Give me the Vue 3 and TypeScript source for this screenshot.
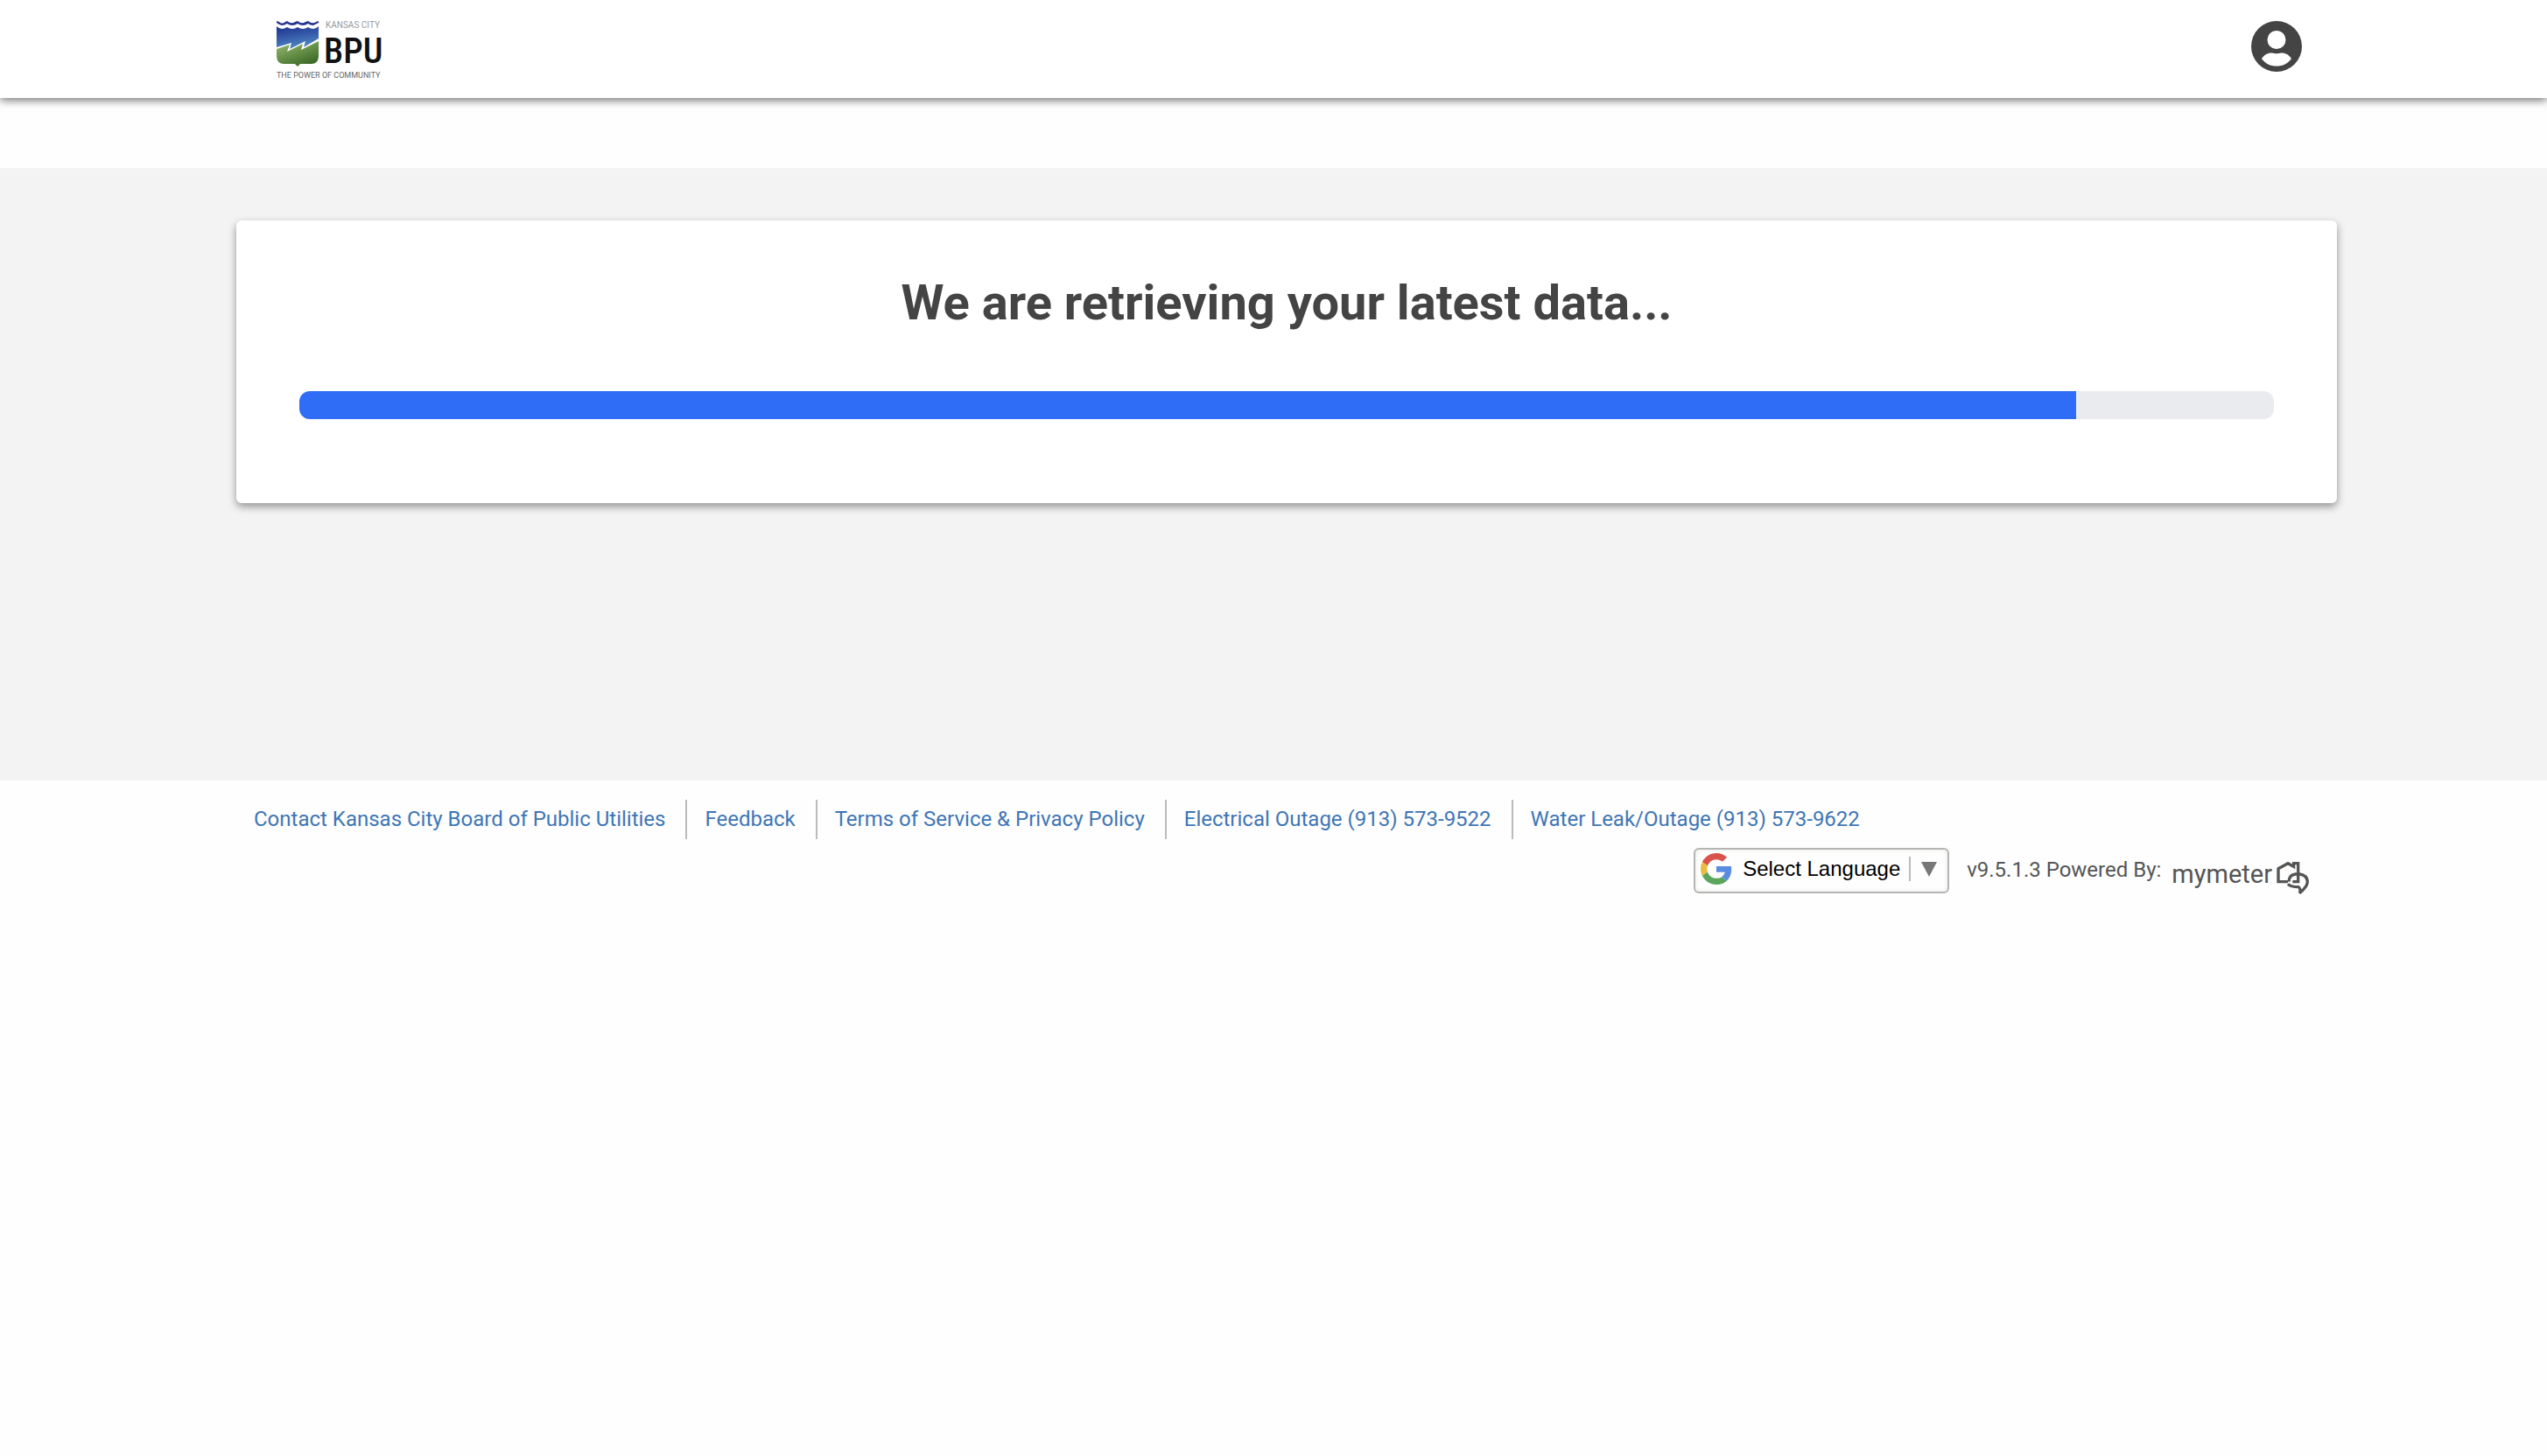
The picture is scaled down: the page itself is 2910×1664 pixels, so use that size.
<script setup lang="ts">
interface FooterLink {
  label: string
  href: string
}

const progress = 90

const links: FooterLink[] = [
  { label: 'Contact Kansas City Board of Public Utilities', href: '#contact' },
  { label: 'Feedback', href: '#feedback' },
  { label: 'Terms of Service & Privacy Policy', href: '#terms' },
  { label: 'Electrical Outage (913) 573-9522', href: 'tel:9135739522' },
  { label: 'Water Leak/Outage (913) 573-9622', href: 'tel:9135739622' },
]
</script>

<template>
  <div class="page">
    <header class="header">
      <div class="container header-inner">
        <a class="brand" href="#home" aria-label="Kansas City BPU">
          <svg width="130" height="70" viewBox="0 0 130 70">
            <defs>
              <linearGradient id="sky" x1="0" y1="0" x2="0.3" y2="1">
                <stop offset="0" stop-color="#1c2f8c" />
                <stop offset="1" stop-color="#4f86c4" />
              </linearGradient>
              <linearGradient id="land" x1="0" y1="0" x2="0.6" y2="1">
                <stop offset="0" stop-color="#9cc070" />
                <stop offset="1" stop-color="#3c6a28" />
              </linearGradient>
            </defs>
            <path d="M1 0 L4 1 Q7 4 11 1 L13 0 Q18 4 22 1 L25 0 Q30 4 34 1 L37 0 Q42 4 46 1 L49 0 V2 Q45 4 43 5 Q39 5 37 3 Q34 5 31 5 Q28 5 25 3 Q22 5 19 5 Q16 5 13 3 Q10 5 7 5 Q3 4 1 2 Z" fill="#26358f" />
            <path d="M1 6 Q4 9 7 9 Q10 9 13 7 Q16 9 19 9 Q22 9 25 7 Q28 9 31 9 Q34 9 37 7 Q40 9 43 9 Q46 9 49 6 V20 L32 30 L34 23 L16 32 L18 25 L1 30 Z" fill="url(#sky)" />
            <path d="M1 32 L16 27 L13 35 L31 26 L29 33 L49 23 V41 Q48 49 41 49 H28 L25 52 L22 49 H9 Q2 49 1 41 Z" fill="url(#land)" />
            <text x="57" y="8" class="brand-city">KANSAS CITY</text>
            <text x="55" y="48" class="brand-name">BPU</text>
            <text x="1" y="65" class="brand-motto">THE POWER OF COMMUNITY</text>
          </svg>
        </a>
        <button class="account" type="button" aria-label="Account">
          <svg width="58" height="58" viewBox="0 0 58 58">
            <circle cx="29" cy="29" r="29" fill="#444" />
            <circle cx="29" cy="21.500" r="10.500" fill="#fff" />
            <path d="M12 43 C15 38 20 36 24 36.500 C27 37.500 31 37.500 34 36.500 C38 36 43 38 46 43 C42 49 36 51.500 29 51.500 C22 51.500 16 49 12 43 Z" fill="#fff" />
          </svg>
        </button>
      </div>
    </header>

    <main class="main">
      <div class="container">
        <section class="card">
          <h1 id="status">We are retrieving your latest data...</h1>
          <div class="track" role="progressbar" aria-labelledby="status" :aria-valuenow="progress" aria-valuemin="0" aria-valuemax="100">
            <div class="fill" :style="{ width: progress + '%' }"></div>
          </div>
        </section>
      </div>
    </main>

    <footer class="footer">
      <div class="container">
        <nav class="links">
          <a v-for="link in links" :key="link.label" :href="link.href">{{ link.label }}</a>
        </nav>
        <div class="credits">
          <label class="language">
            <svg width="36" height="36" viewBox="0 0 48 48" aria-hidden="true">
              <path fill="#d9524b" d="M24 9.500c3.540 0 6.710 1.220 9.210 3.600l6.850-6.850C35.900 2.380 30.470 0 24 0 14.620 0 6.510 5.380 2.560 13.220l7.980 6.190C12.430 13.720 17.740 9.500 24 9.500z" />
              <path fill="#5a8de0" d="M46.980 24.550c0-1.570-.150-3.090-.380-4.550H24v9.020h12.940c-.580 2.960-2.260 5.480-4.780 7.180l7.730 6c4.510-4.180 7.090-10.360 7.090-17.650z" />
              <path fill="#e9bb40" d="M10.530 28.590c-.480-1.450-.760-2.990-.760-4.590s.270-3.140.760-4.590l-7.980-6.190C.920 16.460 0 20.120 0 24c0 3.880.920 7.540 2.560 10.780l7.970-6.190z" />
              <path fill="#5ba55c" d="M24 48c6.480 0 11.930-2.130 15.890-5.810l-7.730-6c-2.150 1.450-4.920 2.300-8.160 2.300-6.260 0-11.570-4.220-13.470-9.910l-7.980 6.190C6.510 42.620 14.620 48 24 48z" />
            </svg>
            <select aria-label="Select Language">
              <option>Select Language</option>
            </select>
            <span class="arrow" aria-hidden="true"></span>
          </label>
          <span class="version">v9.5.1.3 Powered By:</span>
          <a class="mymeter" href="#mymeter">
            <span>mymeter</span>
            <svg width="40" height="42" viewBox="0 0 120 126" fill="none" stroke="#555" stroke-width="10" aria-hidden="true">
              <path d="M42 74 H9 V29 L42 11 L62 22 V11 H77 V74 H58" />
              <path d="M45 74 Q46 50 68 48 H82 Q108 52 109 74 Q109 90 82 113 Q88 98 78 92 Q52 92 42 82" />
            </svg>
          </a>
        </div>
      </div>
    </footer>
  </div>
</template>

<style>
body {
  background: #fefefe;
}
</style>

<style scoped>
.page {
  font-family: Roboto, "Liberation Sans", sans-serif;
  color: #444;
}

.container {
  box-sizing: border-box;
  max-width: 2400px;
  margin: 0 auto;
}

.header {
  position: relative;
  padding-left: 30px;
  background: #fff;
  box-shadow: 0 2px 10px rgba(0, 0, 0, 0.6);
}

.header-inner {
  display: flex;
  justify-content: space-between;
  align-items: flex-start;
  height: 112px;
  padding: 24px 40px 0 45px;
}

.brand,
.account,
.account svg,
.brand svg {
  display: block;
}

.brand-city {
  font-size: 10px;
  fill: #999;
}

.brand-name {
  font-family: "Roboto Condensed", "Liberation Sans Narrow", Roboto, sans-serif;
  font-size: 40px;
  font-weight: 500;
  fill: #111;
}

.brand-motto {
  font-size: 9px;
  fill: #666;
}

.account {
  padding: 0;
  border: 0;
  background: none;
}

.main {
  box-sizing: border-box;
  min-height: 700px;
  margin-top: 80px;
  padding: 60px 0 60px 30px;
  background: #f3f3f3;
}

.card {
  padding: 60px 72px 96px;
  border-radius: 6px;
  background: #fff;
  box-shadow: 0 4px 10px rgba(0, 0, 0, 0.4);
}

h1 {
  margin: 0 0 67px;
  font-size: 56px;
  font-weight: 700;
  line-height: 68px;
  text-align: center;
}

.track {
  height: 32px;
  overflow: hidden;
  border-radius: 12px;
  background: #e9ebef;
}

.fill {
  height: 100%;
  background: #306df6;
}

.footer {
  padding: 22px 0 0 30px;
}

.links {
  display: flex;
  flex-wrap: wrap;
}

.links a {
  padding: 0 23px 0 20px;
  color: #3f76b5;
  font-size: 24px;
  line-height: 45px;
  text-decoration: none;
}

.links a + a {
  border-left: 2px solid #bbb;
}

.credits {
  display: flex;
  justify-content: flex-end;
  align-items: flex-start;
  margin-top: 10px;
  padding-right: 30px;
}

.language {
  display: flex;
  box-sizing: border-box;
  align-items: center;
  height: 52px;
  margin-right: 20px;
  padding: 0 12px 4px 6px;
  border: 2px solid #b5b5b5;
  border-radius: 6px;
  box-shadow: inset 0 0 5px #e6e6e0;
}

.language select {
  margin-left: 12px;
  padding: 0 9px 0 0;
  border: 0;
  border-right: 2px solid #bbb;
  appearance: none;
  background: none;
  color: #000;
  font-family: "Liberation Sans", Arial, sans-serif;
  font-size: 24px;
  line-height: 28px;
}

.arrow {
  margin-left: 12px;
  border: 9px solid transparent;
  border-top: 17px solid #777;
  border-bottom: 0;
}

.version {
  color: #555;
  font-size: 24px;
  line-height: 50px;
}

.mymeter {
  display: flex;
  align-items: flex-start;
  gap: 4px;
  margin-left: 12px;
  padding-top: 14px;
  color: #555;
  font-size: 29px;
  font-weight: 400;
  line-height: 32px;
  text-decoration: none;
}
</style>
